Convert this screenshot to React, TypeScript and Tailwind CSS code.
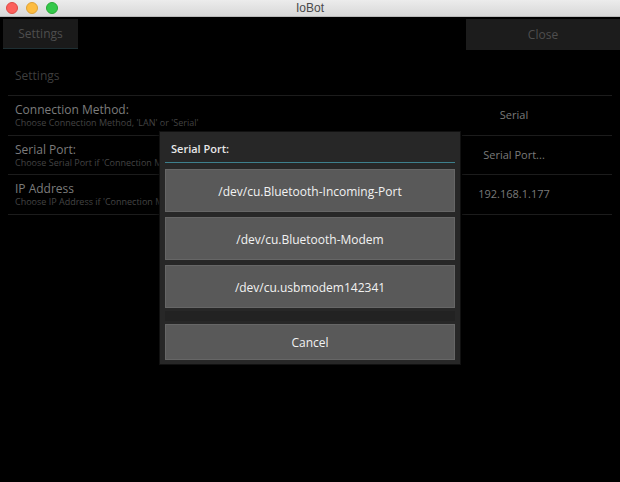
export default function App() {
  const rows = [
    { title: 'Connection Method:', sub: "Choose Connection Method, 'LAN' or 'Serial'", value: 'Serial' },
    { title: 'Serial Port:', sub: "Choose Serial Port if 'Connection Method' is 'Serial'", value: 'Serial Port...' },
    { title: 'IP Address', sub: "Choose IP Address if 'Connection Method' is 'LAN'", value: '192.168.1.177' },
  ];
  const ports = ['/dev/cu.Bluetooth-Incoming-Port', '/dev/cu.Bluetooth-Modem', '/dev/cu.usbmodem142341'];

  return (
    <div className="relative flex h-[482px] w-[620px] flex-col overflow-hidden bg-black font-['Open_Sans','Noto_Sans',sans-serif]">
      {/* window title bar */}
      <div className="relative flex h-[17px] shrink-0 items-center justify-center border-b border-[#b9b9b9] bg-gradient-to-b from-[#ececec] to-[#d8d8d8]">
        <div className="absolute left-[6px] top-[2px] flex gap-[8px]">
          <span className="h-[12px] w-[12px] rounded-full bg-[#fc605c] border border-[#de4a45]" />
          <span className="h-[12px] w-[12px] rounded-full bg-[#fdbc40] border border-[#dea236]" />
          <span className="h-[12px] w-[12px] rounded-full bg-[#34c84a] border border-[#27aa35]" />
        </div>
        <span className="font-['Liberation_Sans',sans-serif] text-[12px] leading-none text-[#4a4a4a]">IoBot</span>
      </div>

      {/* top action bar */}
      <div className="flex h-[35px] shrink-0 items-start justify-between pt-[2px]">
        <div className="ml-[3px] flex h-[30px] w-[75px] items-center justify-center border-b border-[#1e2f33] bg-[#1a1a1a] text-[12px] text-[#4e4e4e]">
          Settings
        </div>
        <div className="flex h-[31px] w-[154px] items-center justify-center bg-[#1c1c1c] text-[12px] text-[#4e4e4e]">
          Close
        </div>
      </div>

      {/* settings list */}
      <div className="px-[8px]">
        <div className="flex h-[44px] items-center border-b border-[#1c1c1c] pl-[7px] pt-[5px] text-[12px] text-[#3e3e3e]">
          Settings
        </div>
        {rows.map((r) => (
          <div key={r.title} className="flex h-[39.5px]">
            <div className="flex w-[450px] flex-col justify-center border-b border-[#1c1c1c] pl-[7px] pt-[1px]">
              <div className="text-[12px] leading-[15px] text-[#7c7c7c]">{r.title}</div>
              <div className="text-[9px] leading-[12px] text-[#444]">{r.sub}</div>
            </div>
            <div className="ml-[4px] flex flex-1 items-center justify-center border-b border-[#1c1c1c] pr-[46px] text-[11px] text-[#7a7a7a]">
              {r.value}
            </div>
          </div>
        ))}
      </div>

      {/* serial port dialog */}
      <div className="absolute left-[159px] top-[131px] flex h-[234px] w-[302px] flex-col border border-[#111] bg-[#272727] px-[5px] pb-[4px] shadow-[0_0_6px_rgba(0,0,0,0.8)]">
        <div className="flex h-[31px] items-end pb-[4px] pl-[6px] text-[11px] font-semibold text-[#e8e8e8]">Serial Port:</div>
        <div className="h-[2px] bg-[#3d7f8c]" />
        <div className="mt-[6px] flex flex-col gap-[5px]">
          {ports.map((p) => (
            <div key={p} className="flex h-[43px] items-center justify-center border border-[#666] bg-[#595959] pt-[2px] text-[12px] text-[#f2f2f2]">
              {p}
            </div>
          ))}
        </div>
        <div className="mt-[3px] h-[10px] bg-[#222]" />
        <div className="mt-[3px] flex h-[38px] items-center justify-center border border-[#666] bg-[#595959] pt-[2px] text-[12px] text-[#f2f2f2]">
          Cancel
        </div>
      </div>
    </div>
  );
}
